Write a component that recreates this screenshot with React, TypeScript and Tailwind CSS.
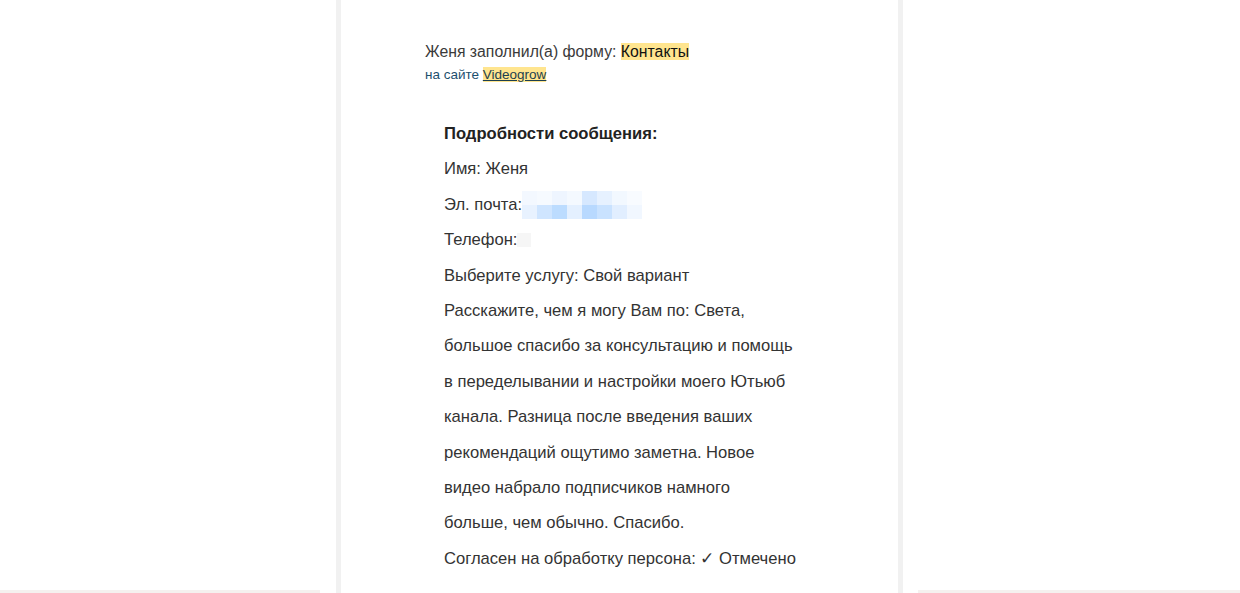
export default function App() {
  const blur = [
    ["#f3f8ff", "#f6faff", "#eef5ff", "#f4f9ff", "#d6e8ff", "#e6f1ff", "#f2f8ff", "#f8fbff"],
    ["#e8f2ff", "#cfe5ff", "#bcdcff", "#e4f0ff", "#b8d9ff", "#c9e2ff", "#e1eeff", "#f1f7ff"],
  ];

  return (
    <div className="h-[593px] w-full bg-white flex overflow-hidden font-['Liberation_Sans',Arial,sans-serif]">
      <div className="w-[336px] flex flex-col">
        <div className="flex-1" />
        <div className="h-[3px] w-[320px] bg-[#f5f1ef]" />
      </div>
      <div className="w-[5px] bg-[#f1f1f1]" />

      <div className="w-[557px] pt-[42px] pl-[84px]">
        <div className="text-[15.8px] leading-[19px] text-[#3a3a3a]">
          Женя заполнил(а) форму:{" "}
          <span className="bg-[#ffe58f] text-[#111]">Контакты</span>
        </div>
        <div className="text-[13.5px] leading-[18px] mt-[5px] text-[#1d4f6e]">
          на сайте{" "}
          <span className="bg-[#ffe58f] text-[#1d3f4e] underline">Videogrow</span>
        </div>

        <div className="mt-[32px] ml-[19px] text-[16.6px] leading-[35.4px] text-[#333]">
          <div className="font-bold text-[#222]">Подробности сообщения:</div>
          <div>Имя: Женя</div>
          <div className="flex items-center">
            <span>Эл. почта:</span>
            <div className="flex flex-col">
              {blur.map((row, i) => (
                <div key={i} className="flex">
                  {row.map((c, j) => (
                    <div key={j} className="w-[15px] h-[14px]" style={{ backgroundColor: c }} />
                  ))}
                </div>
              ))}
            </div>
          </div>
          <div className="flex items-center">
            <span>Телефон:</span>
            <div className="w-[14px] h-[14px] bg-[#f6f6f6]" />
          </div>
          <div>Выберите услугу: Свой вариант</div>
          <div>
            Расскажите, чем я могу Вам по: Света,
            <br />
            большое спасибо за консультацию и помощь
            <br />
            в переделывании и настройки моего Ютьюб
            <br />
            канала. Разница после введения ваших
            <br />
            рекомендаций ощутимо заметна. Новое
            <br />
            видео набрало подписчиков намного
            <br />
            больше, чем обычно. Спасибо.
          </div>
          <div>Согласен на обработку персона: ✓ Отмечено</div>
        </div>
      </div>

      <div className="w-[5px] bg-[#f1f1f1]" />
      <div className="flex-1 flex flex-col">
        <div className="flex-1" />
        <div className="h-[3px] ml-[15px] bg-[#f5f1ef]" />
      </div>
    </div>
  );
}
